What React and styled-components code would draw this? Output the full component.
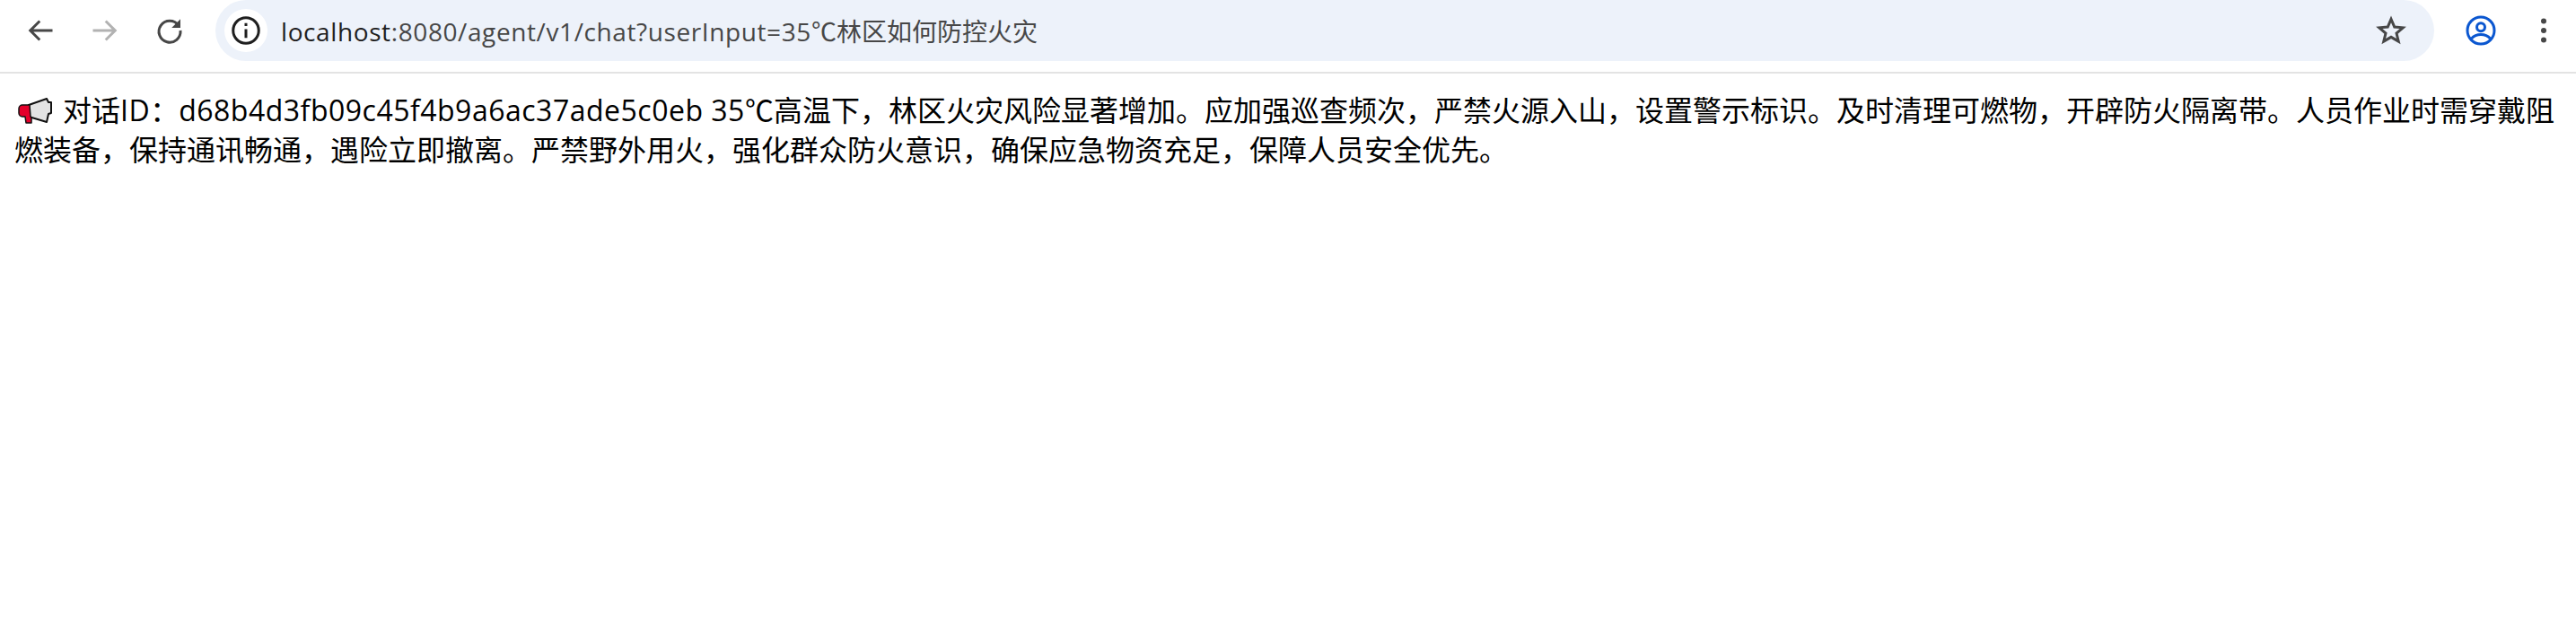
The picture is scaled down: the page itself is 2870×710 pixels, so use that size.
import React from "react";
import styled, { createGlobalStyle } from "styled-components";

const Global = createGlobalStyle`
  html, body { margin: 0; padding: 0; background: #fff; }
`;
const Toolbar = styled.header`
  height: 80px; display: flex; align-items: flex-start; background: #fff;
  border-bottom: 2px solid #e3e3e3;
`;
const NavGroup = styled.nav`
  width: 240px; height: 68px; display: flex; align-items: center; padding-left: 27px; gap: 36px; box-sizing: border-box; flex: none;
`;
const IconSlot = styled.svg`
  width: 36px; height: 36px; flex: none; display: block;
`;
const Omnibox = styled.div`
  width: 2472px; height: 68px; flex: none; background: #edf2fa; border-radius: 34px;
  display: flex; align-items: center; padding: 0 30px 0 10px; box-sizing: border-box;
`;
const InfoChip = styled.div`
  width: 48px; height: 48px; border-radius: 50%; background: #fff; display: flex; align-items: center; justify-content: center; flex: none;
`;
const Url = styled.div`
  margin-left: 15px; flex: 1; font: 28px "Open Sans", "Noto Sans CJK SC", sans-serif; color: #474747; white-space: nowrap;
`;
const Host = styled.span` color: #1f1f1f; letter-spacing: 0.6px; `;
const Path = styled.span` letter-spacing: 0.6px; `;
const Actions = styled.div`
  flex: 1; height: 68px; display: flex; align-items: center; padding-left: 34px; gap: 34px;
`;
const Content = styled.main`
  padding: 18px 8px 0 16px; font: 32px/42px "Noto Sans CJK SC", "Liberation Sans", sans-serif; color: #000;
`;
const Latin = styled.span` font-family: "Open Sans", sans-serif; letter-spacing: 0.5px; `;
const Horn = styled.svg`
  width: 38px; height: 30px; vertical-align: -4px; margin-right: 12px; margin-left: 4px;
`;

export default function App() {
  return (
    <>
      <Global />
      <Toolbar>
        <NavGroup>
          <IconSlot viewBox="0 0 24 24" fill="none" stroke="#474747" strokeWidth="2"><path d="M21 12H4.500M11.500 5l-7 7 7 7" /></IconSlot>
          <IconSlot viewBox="0 0 24 24" fill="none" stroke="#b2b2b2" strokeWidth="2"><path d="M3 12h16.500M12.500 5l7 7-7 7" /></IconSlot>
          <IconSlot viewBox="0 0 24 24" fill="none" stroke="#474747" strokeWidth="2"><path d="M18.600 8.200A8 8 0 1 0 20 12" /><path d="M20 3.500V10h-6.500z" fill="#474747" stroke="none" /></IconSlot>
        </NavGroup>
        <Omnibox>
          <InfoChip>
            <IconSlot viewBox="0 0 24 24" fill="none" stroke="#1f1f1f" strokeWidth="2"><circle cx="12" cy="12" r="9.500" /><path d="M12 11v6.500M12 6.500v2.200" /></IconSlot>
          </InfoChip>
          <Url><Host>localhost</Host><Path>:8080/agent/v1/chat?userInput=35</Path>℃林区如何防控火灾</Url>
          <IconSlot viewBox="0 0 24 24" fill="none" stroke="#474747" strokeWidth="2"><path d="M12 3.600l2.500 5.800 6.300.5-4.800 4.100 1.500 6.100L12 16.900l-5.500 3.200L8 14 3.200 9.900l6.300-.5z" /></IconSlot>
        </Omnibox>
        <Actions>
          <IconSlot viewBox="0 0 24 24" fill="none" stroke="#0b57d0" strokeWidth="2"><circle cx="12" cy="12" r="10" /><circle cx="12" cy="9.500" r="3" /><path d="M5 18c3.500-4 10.500-4 14 0" /></IconSlot>
          <IconSlot viewBox="0 0 24 24" fill="#474747"><circle cx="12" cy="5" r="2" /><circle cx="12" cy="12" r="2" /><circle cx="12" cy="19" r="2" /></IconSlot>
        </Actions>
      </Toolbar>
      <Content>
        <Horn viewBox="0 0 38 30">
          <path d="M12 8L32 1l2 4 3 0v12l-3 1-2 9-20-6z" fill="#e3e3e3" stroke="#111" strokeWidth="2" strokeLinejoin="round" />
          <path d="M13 8H5a4 4 0 0 0-4 4v5a4 4 0 0 0 4 4h3l1 7h6v-6l-1-1z" fill="#e4002b" stroke="#111" strokeWidth="1.500" strokeLinejoin="round" />
        </Horn>
        对话<Latin>ID</Latin>：<Latin>d68b4d3fb09c45f4b9a6ac37ade5c0eb 35</Latin>℃高温下，林区火灾风险显著增加。应加强巡查频次，严禁火源入山，设置警示标识。及时清理可燃物，开辟防火隔离带。人员作业时需穿戴阻燃装备，保持通讯畅通，遇险立即撤离。严禁野外用火，强化群众防火意识，确保应急物资充足，保障人员安全优先。
      </Content>
    </>
  );
}
